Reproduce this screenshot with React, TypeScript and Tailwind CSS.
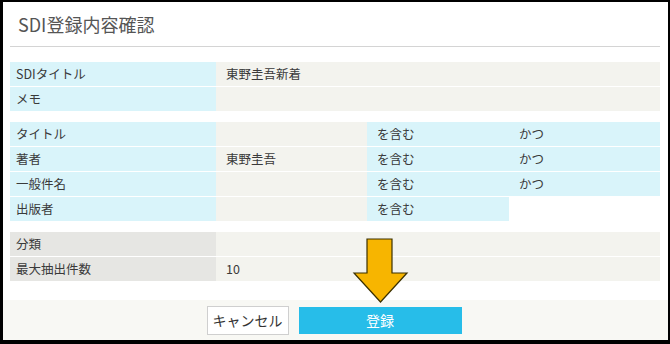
import React from "react"

const font = { fontFamily: '"Noto Sans CJK JP", "Noto Sans", sans-serif' }

const labelCell = "h-[24px] flex items-center pl-[6px] bg-[#d9f4fa]"
const valueCell = "h-[24px] flex items-center pl-[10px] bg-[#f3f3ee]"
const condCell = "h-[24px] flex items-center pl-[10px] bg-[#d9f4fa]"

export default function App() {
  const conditions = [
    { label: "タイトル", value: "", andOr: "かつ" },
    { label: "著者", value: "東野圭吾", andOr: "かつ" },
    { label: "一般件名", value: "", andOr: "かつ" },
    { label: "出版者", value: "", andOr: "" },
  ]

  return (
    <div
      className="relative w-[670px] h-[344px] bg-white border-black border-t-2 border-l-[3px] border-r-2 border-b-4 flex flex-col text-[12.5px] text-[#3a3a3a]"
      style={font}
    >
      {/* ヘッダー */}
      <div className="mx-[7px] h-[45px] flex items-center pl-[8px] border-b border-[#d4d4d4] w-[650px]">
        <h1 className="text-[18px] text-[#555] font-normal leading-none">SDI登録内容確認</h1>
      </div>

      {/* SDI情報 */}
      <div className="ml-[7px] mt-[15px] w-[650px] grid grid-cols-[206px_444px] gap-y-px bg-white">
        <div className={labelCell}>SDIタイトル</div>
        <div className={valueCell}>東野圭吾新着</div>
        <div className={labelCell}>メモ</div>
        <div className={valueCell}></div>
      </div>

      {/* 検索条件 */}
      <div className="ml-[7px] mt-[11px] w-[650px] grid grid-cols-[206px_151px_142px_151px] gap-y-px bg-white">
        {conditions.map((c) => (
          <React.Fragment key={c.label}>
            <div className={labelCell}>{c.label}</div>
            <div className={valueCell}>{c.value}</div>
            <div className={condCell}>を含む</div>
            {c.andOr ? <div className={condCell}>{c.andOr}</div> : <div className="h-[24px] bg-white" />}
          </React.Fragment>
        ))}
      </div>

      {/* その他 */}
      <div className="ml-[7px] mt-[11px] w-[650px] grid grid-cols-[206px_444px] gap-y-px bg-white">
        <div className="h-[24px] flex items-center pl-[6px] bg-[#e6e6e3]">分類</div>
        <div className={valueCell}></div>
        <div className="h-[24px] flex items-center pl-[6px] bg-[#e6e6e3]">最大抽出件数</div>
        <div className={valueCell}>10</div>
      </div>

      {/* フッター */}
      <div className="mt-auto h-[40px] bg-[#f8f8f4] flex items-center justify-center gap-[10px] pr-[3px]">
        <button className="w-[82px] h-[29px] border border-[#cfcfcf] bg-white text-[14px] text-[#333]">
          キャンセル
        </button>
        <button className="w-[163px] h-[27px] bg-[#27bde9] text-white text-[14px]">登録</button>
      </div>

      {/* 矢印 */}
      <svg
        className="absolute left-[349px] top-[234px]"
        width="60"
        height="70"
        viewBox="0 0 60 70"
      >
        <polygon
          points="15,3 40,3 40,37 55,37 28.5,66 2,37 15,37"
          fill="#f7b500"
          stroke="#3b3000"
          strokeWidth="1.2"
          strokeLinejoin="miter"
        />
      </svg>
    </div>
  )
}
